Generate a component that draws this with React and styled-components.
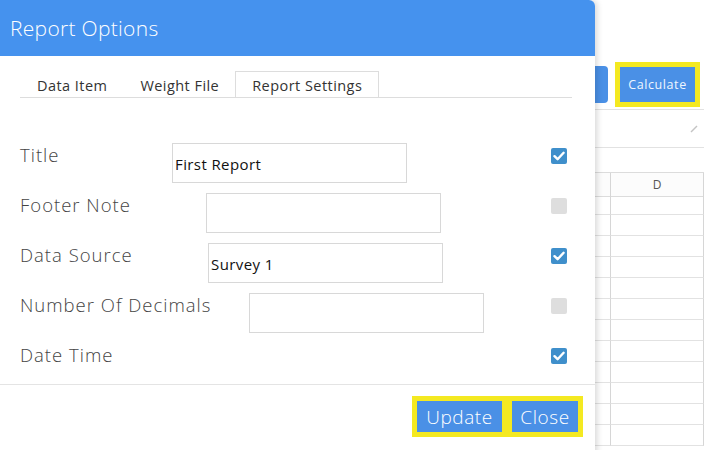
import React from "react";
import styled, { createGlobalStyle } from "styled-components";

const GlobalStyle = createGlobalStyle`
  html, body {
    margin: 0;
    padding: 0;
    background: #fff;
    font-family: "Open Sans", "Liberation Sans", sans-serif;
  }
  #root {
    width: 704px;
    height: 450px;
    overflow: hidden;
  }
`

const Page = styled.div`
  position: relative;
  width: 704px;
  height: 450px;
  overflow: hidden;
  background: #fff;
`

/* ---------- background sheet ---------- */

const Toolbar = styled.div`
  height: 110px;
  box-sizing: border-box;
  padding: 62px 4px 0 0;
  display: flex;
  justify-content: flex-end;
  align-items: flex-start;
  gap: 7px;
  border-bottom: 1px solid #e2e2e2;
`

const ToolButton = styled.div`
  margin-top: 4px;
  width: 90px;
  height: 37px;
  border-radius: 4px;
  background: #4a90e6;
`

const Highlight = styled.div`
  display: flex;
  gap: ${p => p.gap || 0}px;
  padding: 5px;
  background: #f4e921;
`

const CalcButton = styled.div`
  width: 75px;
  height: 35px;
  display: flex;
  align-items: center;
  justify-content: center;
  background: #4a90e6;
  color: #eef6ff;
  font-size: 12.5px;
  letter-spacing: 0.6px;
`

const FormulaBar = styled.div`
  height: 37px;
  display: flex;
  justify-content: flex-end;
  align-items: center;
  padding-right: 6px;
  border-bottom: 1px solid #e2e2e2;
`

const Spacer = styled.div`
  height: 24px;
`

const Grid = styled.div`
  display: grid;
  grid-template-columns: 40px 190px 190px 191px 1fr;
  grid-auto-rows: 21px;
  border-top: 1px solid #dcdcdc;
`

const HeadCell = styled.div`
  height: 23px;
  display: flex;
  align-items: center;
  justify-content: center;
  background: #fcfcfc;
  border-right: 1px solid #d6d6d6;
  border-bottom: 1px solid #dcdcdc;
  color: #555;
  font-size: 12px;
`

const Cell = styled.div`
  border-right: 1px solid #d6d6d6;
  border-bottom: 1px solid #e2e2e2;
  box-sizing: border-box;
`

/* ---------- modal ---------- */

const Modal = styled.div`
  position: absolute;
  top: 0;
  left: 0;
  width: 595px;
  height: 470px;
  background: #fff;
  border-radius: 0 6px 0 0;
  box-shadow: 2px 0 6px rgba(0, 0, 0, 0.16);
  display: flex;
  flex-direction: column;
`

const Header = styled.div`
  height: 56px;
  display: flex;
  align-items: center;
  padding: 0 10px;
  background: #4592ee;
  border-radius: 0 6px 0 0;
  color: #fff;
  font-size: 21px;
  font-weight: 300;
  letter-spacing: 0.3px;
`

const Body = styled.div`
  padding: 15px 23px 0 20px;
`

const Tabs = styled.div`
  display: flex;
  height: 27px;
  border-bottom: 1px solid #ddd;
  box-sizing: border-box;
  align-items: flex-end;
`

const Tab = styled.div`
  height: 27px;
  box-sizing: border-box;
  padding: 0 16px;
  display: flex;
  align-items: center;
  margin-bottom: -1px;
  margin-right: -1px;
  border: 1px solid ${p => (p.active ? "#ddd" : "transparent")};
  border-bottom: none;
  color: #333;
  font-size: 14.5px;
  letter-spacing: 0.45px;
`

const Form = styled.div`
  padding: 45px 5px 0 0;
  display: flex;
  flex-direction: column;
`

const Row = styled.div`
  height: 50px;
  display: flex;
  align-items: flex-start;

  &:last-child {
    height: 41px;
  }
`

const Label = styled.div`
  width: ${p => p.width}px;
  line-height: 24px;
  color: #444;
  font-size: 18.5px;
  font-weight: 300;
  letter-spacing: 1px;
  white-space: nowrap;
`

const Input = styled.div`
  width: 235px;
  height: 40px;
  box-sizing: border-box;
  border: 1px solid #d8d8d8;
  display: flex;
  align-items: center;
  padding: 1px 2px 0;
  color: #111;
  font-size: 15px;
  letter-spacing: 0.4px;
`

const Check = styled.div`
  margin: 5px 0 0 auto;
  width: 16px;
  height: 16px;
  border-radius: 2px;
  background: ${p => (p.checked ? "#3f8fcb" : "#dedede")};
  display: flex;
  align-items: center;
  justify-content: center;
`

const Footer = styled.div`
  border-top: 1px solid #e4e4e4;
  display: flex;
  justify-content: flex-end;
  padding: 11px 12px 0 0;
`

const ActionButton = styled.div`
  width: ${p => p.width}px;
  height: 31px;
  display: flex;
  align-items: center;
  justify-content: center;
  background: #4a90e6;
  color: #fff;
  font-size: 19px;
  font-weight: 300;
  letter-spacing: 0.6px;
`

const rows = [
  { label: "Title", start: 152, value: "First Report", checked: true },
  { label: "Footer Note", start: 186, value: "", checked: false },
  { label: "Data Source", start: 188, value: "Survey 1", checked: true },
  { label: "Number Of Decimals", start: 229, value: "", checked: false },
  { label: "Date Time", checked: true },
];

function Tick() {
  return (
    <svg width="12" height="10" viewBox="0 0 12 10">
      <path d="M1.5 5.2 L4.6 8.2 L10.6 1.8" fill="none" stroke="#fff" strokeWidth="2.4" strokeLinecap="round" strokeLinejoin="round" />
    </svg>
  );
}

function Pencil() {
  return (
    <svg width="8" height="8" viewBox="0 0 8 8">
      <path d="M1 7 L7 1" stroke="#c4c4c4" strokeWidth="1.4" />
    </svg>
  );
}

export default function App() {
  const bodyRows = Array.from({ length: 12 });
  return (
    <Page>
      <GlobalStyle />
      <Toolbar>
        <ToolButton />
        <Highlight>
          <CalcButton>Calculate</CalcButton>
        </Highlight>
      </Toolbar>
      <FormulaBar>
        <Pencil />
      </FormulaBar>
      <Spacer />
      <Grid>
        <HeadCell />
        <HeadCell>A</HeadCell>
        <HeadCell>B</HeadCell>
        <HeadCell>C</HeadCell>
        <HeadCell>D</HeadCell>
        {bodyRows.map((_, r) =>
          [0, 1, 2, 3, 4].map(c => <Cell key={r + "-" + c} />)
        )}
      </Grid>

      <Modal>
        <Header>Report Options</Header>
        <Body>
          <Tabs>
            <Tab>Data Item</Tab>
            <Tab>Weight File</Tab>
            <Tab active>Report Settings</Tab>
          </Tabs>
          <Form>
            {rows.map(row => (
              <Row key={row.label}>
                <Label width={row.start}>{row.label}</Label>
                {row.start !== undefined && <Input>{row.value}</Input>}
                <Check checked={row.checked}>{row.checked && <Tick />}</Check>
              </Row>
            ))}
          </Form>
        </Body>
        <Footer>
          <Highlight gap={10}>
            <ActionButton width={85}>Update</ActionButton>
            <ActionButton width={66}>Close</ActionButton>
          </Highlight>
        </Footer>
      </Modal>
    </Page>
  );
}
